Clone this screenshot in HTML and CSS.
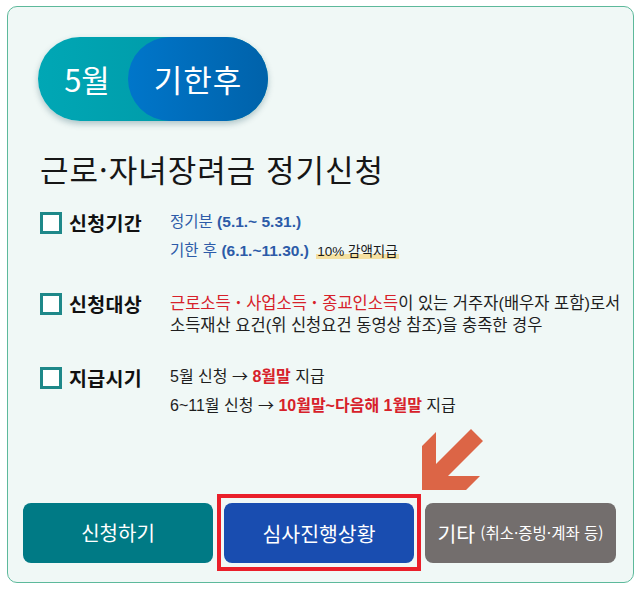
FILE: index.html
```
<!DOCTYPE html>
<html lang="ko">
<head>
<meta charset="utf-8">
<title>근로·자녀장려금 정기신청</title>
<link rel="stylesheet" href="styles.css">
</head>
<body>
<div class="card">
  <div class="head">
    <div class="pill">
      <span class="pill-month">5월</span>
      <span class="pill-state">기한후</span>
    </div>
    <h1 class="title">근로·자녀장려금 정기신청</h1>
  </div>

  <div class="rows">
    <div class="row">
      <div class="label"><span class="icon"></span>신청기간</div>
      <div class="content content-sm">
        <p class="line blue">정기분 <b>(5.1.~ 5.31.)</b></p>
        <p class="line blue">기한 후 <b>(6.1.~11.30.)</b> <span class="mark">10% 감액지급</span></p>
      </div>
    </div>
    <div class="row">
      <div class="label"><span class="icon"></span>신청대상</div>
      <div class="content content-lg">
        <p class="para"><span class="red">근로소득<span class="dot">·</span>사업소득<span class="dot">·</span>종교인소득</span>이 있는 거주자(배우자 포함)로서<br>소득재산 요건(위 신청요건 동영상 참조)을 충족한 경우</p>
      </div>
    </div>
    <div class="row">
      <div class="label"><span class="icon"></span>지급시기</div>
      <div class="content content-md">
        <p class="line">5월 신청 <span class="arr">→</span> <b class="red">8월말</b> 지급</p>
        <p class="line">6~11월 신청 <span class="arr">→</span> <b class="red">10월말~다음해 1월말</b> 지급</p>
      </div>
    </div>
  </div>

  <div class="actions">
    <a class="btn btn-apply" href="#">신청하기</a>
    <a class="btn btn-status" href="#">심사진행상황</a>
    <a class="btn btn-etc" href="#">기타 <small>(취소·증빙·계좌 등)</small></a>
  </div>

  <svg class="arrow" width="64" height="64" viewBox="0 0 64 64" aria-hidden="true">
    <polygon points="15,5 1,19 1,63 45,63 59,49 27,49 62,14 50,2 15,37" fill="#dc6546"/>
  </svg>
</div>
</body>
</html>
```

FILE: styles.css
```
* { box-sizing: border-box; }

html, body {
  margin: 0;
  padding: 0;
  background: #ffffff;
}

body {
  font-family: "Noto Sans CJK KR", "Noto Sans", sans-serif;
  color: #1e1e1e;
}

.card {
  position: relative;
  margin: 6px 0 0 7px;
  width: 627px;
  height: 577px;
  border: 1px solid #5db99b;
  border-radius: 10px;
  background: #f0f8f6;
  padding: 30px 17px 19px 15px;
  display: flex;
  flex-direction: column;
}

.head {
  padding-left: 15px;
}

.pill {
  display: flex;
  width: 230px;
  height: 84px;
  border-radius: 42px;
  background: linear-gradient(90deg, #00a7b5 0%, #0094a1 100%);
  box-shadow: 0 3px 6px rgba(0, 60, 80, 0.28);
  color: #ffffff;
  font-size: 31px;
  line-height: 84px;
}

.pill-month {
  width: 90px;
  padding-left: 8px;
  text-align: center;
}

.pill-state {
  width: 140px;
  border-radius: 42px;
  background: linear-gradient(90deg, #0076ca 0%, #0062aa 100%);
  text-align: center;
  letter-spacing: 1px;
}

.title {
  margin: 28px 0 0 2px;
  font-size: 31px;
  letter-spacing: 1px;
  font-weight: 400;
  line-height: 40px;
  color: #161616;
}

.rows {
  margin-top: 22px;
  padding-left: 17px;
  display: flex;
  flex-direction: column;
  gap: 30px;
}

.row {
  display: grid;
  grid-template-columns: 130px 1fr;
}

.label {
  display: flex;
  align-items: center;
  height: 22px;
  font-size: 19.5px;
  letter-spacing: 0.3px;
  font-weight: 700;
  color: #111;
}

.icon {
  position: relative;
  width: 29px;
  height: 22px;
  flex: none;
}

.icon::after {
  content: "";
  position: absolute;
  left: 5px;
  top: 7px;
  width: 15px;
  height: 15px;
  background: #93e0c8;
}

.icon::before {
  content: "";
  position: absolute;
  left: 0;
  top: 1px;
  width: 16px;
  height: 16px;
  border: 3px solid #1e8889;
  background: #ffffff;
  z-index: 1;
}

.content {
  font-family: "Liberation Sans", "Noto Sans CJK KR", sans-serif;
}

.content-sm { font-size: 15.5px; }
.content-md { font-size: 16px; }
.content-lg { font-size: 16.5px; }

.line {
  margin: 0 0 7px;
  height: 22px;
  line-height: 22px;
  white-space: nowrap;
}

.line:last-child { margin-bottom: 0; }

.para {
  margin: 0;
  line-height: 22px;
  white-space: nowrap;
}

.dot {
  font-family: "Noto Sans CJK KR", sans-serif;
  font-weight: 700;
  margin: 0 5px;
  line-height: 1;
}

.arr {
  font-family: "Noto Sans CJK KR", sans-serif;
  line-height: 1;
}

.blue { color: #2c5ba8; }
.blue b { font-weight: 700; }

.red { color: #d7212a; }
b.red { font-weight: 700; }

.mark {
  margin-left: 3px;
  font-size: 13.5px;
  color: #1a1a1a;
  padding: 0 1px;
  background: linear-gradient(to top, #f5e0a0 5px, transparent 5px);
}

.actions {
  margin-top: auto;
  display: flex;
  gap: 11px;
}

.btn {
  position: relative;
  width: 190px;
  height: 60px;
  border-radius: 8px;
  display: flex;
  align-items: center;
  justify-content: center;
  color: #ffffff;
  text-decoration: none;
  font-size: 20px;
  line-height: 1;
}

.btn small {
  font-size: 15.5px;
  margin-left: 5px;
}

.btn-apply { background: #007a85; }
.btn-status { background: #194db0; font-size: 20.5px; }
.btn-etc { background: #736e6d; width: 191px; font-size: 20.5px; }

.btn-status::after {
  content: "";
  position: absolute;
  left: -7px;
  right: -7px;
  top: -9px;
  bottom: -8px;
  border: 4px solid #ea1f2a;
}

.arrow {
  position: absolute;
  left: 413px;
  top: 420px;
}
```
